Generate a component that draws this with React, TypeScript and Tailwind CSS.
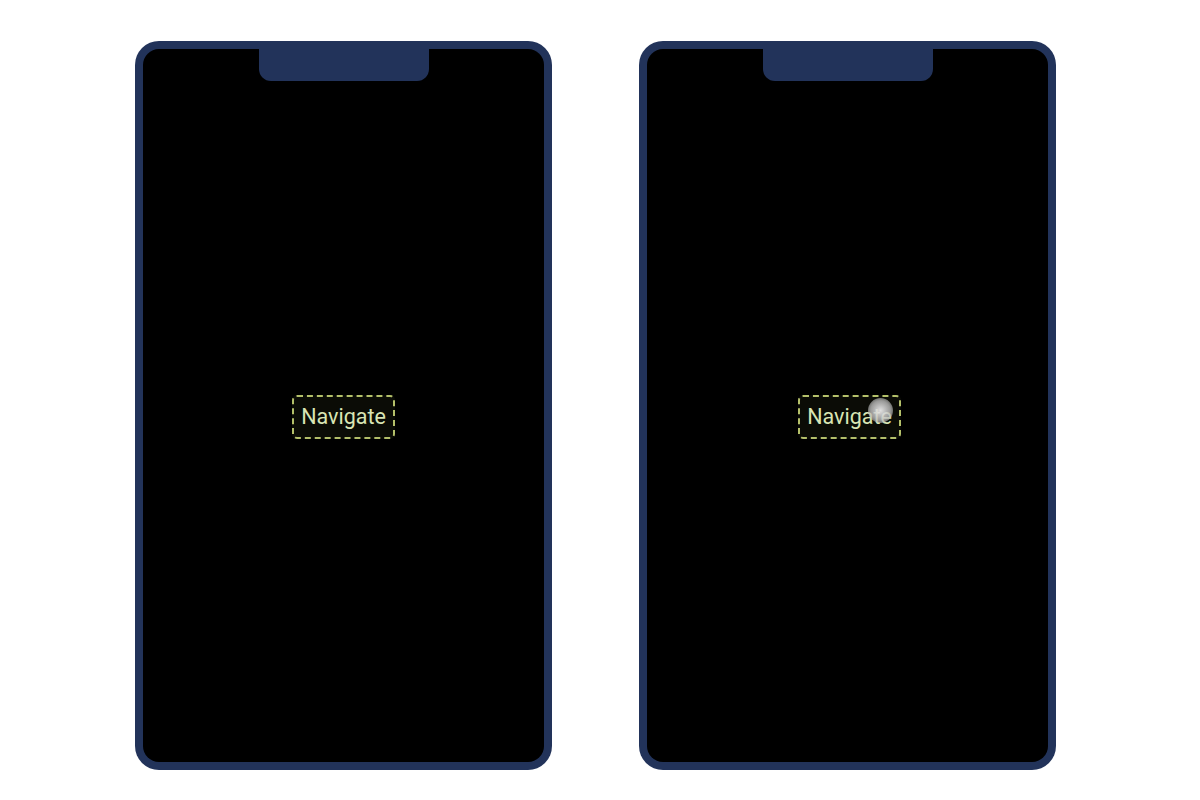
function Phone({ touch = false }: { touch?: boolean }) {
  return (
    <div className="h-[729px] w-[417px] rounded-[24px] bg-[#22335a] p-[8px]">
      <div className="relative flex h-full w-full items-center justify-center rounded-[16px] bg-black pt-[23px]">
        {/* notch */}
        <div className="absolute left-[116px] top-0 h-[32px] w-[170px] rounded-b-[12px] bg-[#22335a]" />
        <div className={touch ? "relative ml-[4px]" : "relative"}>
          <button className="flex h-[44px] w-[103px] items-center justify-center rounded-[5px] border-2 border-dashed border-[#b4c06a] bg-[#0b0c06] font-['Roboto',sans-serif] text-[21.5px] text-[#d9e5b4]">
            Navigate
          </button>
          {touch && (
            <div className="absolute left-[70px] top-[3px] h-[25px] w-[25px] rounded-full bg-[radial-gradient(circle,rgba(235,235,235,0.95)_0%,rgba(190,190,190,0.8)_55%,rgba(120,120,120,0.2)_100%)]" />
          )}
        </div>
      </div>
    </div>
  );
}

export default function App() {
  return (
    <div className="flex h-[800px] w-[1200px] items-start gap-[87px] bg-white pl-[135px] pt-[41px]">
      <Phone />
      <Phone touch />
    </div>
  );
}
